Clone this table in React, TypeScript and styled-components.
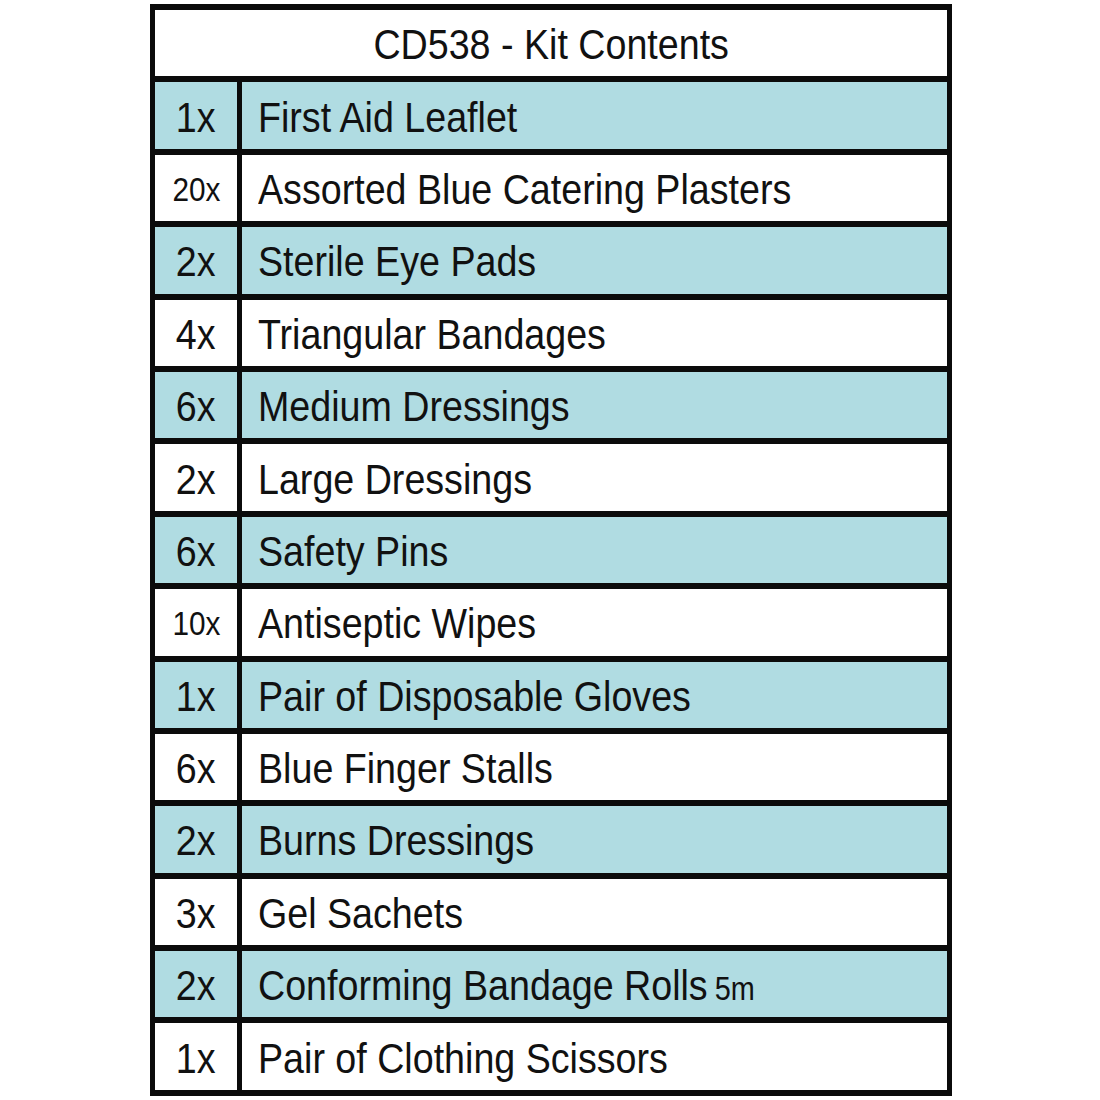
import React from 'react';
import styled, { createGlobalStyle } from 'styled-components';

const GlobalStyle = createGlobalStyle`
    html, body {
        margin: 0;
        padding: 0;
        background: #ffffff;
    }
    body {
        font-family: 'Liberation Sans', Arial, sans-serif;
        color: #111111;
    }
`;

const Page = styled.div`
    width: 1100px;
    height: 1100px;
    padding-top: 4px;
    padding-left: 150px;
    box-sizing: border-box;
`;

const Table = styled.div`
    width: 802px;
    display: grid;
    grid-template-columns: 82px 1fr;
    grid-auto-rows: 66.4px;
    gap: 6px 5px;
    padding: 6px 5px;
    box-sizing: border-box;
    background: #0b0b0b;
`;

// the artwork uses a condensed face, so squeeze Liberation Sans horizontally
const Narrow = styled.span<{ $origin: string }>`
    display: inline-block;
    white-space: nowrap;
    transform: scaleX(0.875);
    transform-origin: ${(p) => p.$origin} center;
`;

const Title = styled.div`
    grid-column: 1 / -1;
    background: #ffffff;
    display: flex;
    align-items: center;
    justify-content: center;
    font-size: 43px;
    padding-top: 2px;
`;

const Cell = styled.div<{ $shaded: boolean }>`
    background: ${(p) => (p.$shaded ? '#b0dce2' : '#ffffff')};
    display: flex;
    align-items: center;
    white-space: nowrap;
    overflow: hidden;
    padding-top: 3px;
`;

const Qty = styled(Cell)<{ $small: boolean }>`
    justify-content: center;
    font-size: ${(p) => (p.$small ? '34px' : '43px')};
`;

const Item = styled(Cell)`
    padding-left: 16px;
    font-size: 43px;
`;

const Unit = styled.span`
    font-size: 33px;
    margin-left: 8px;
`;

interface Entry {
    qty: string;
    name: string;
    unit?: string;
}

const entries: Entry[] = [
    { qty: '1x', name: 'First Aid Leaflet' },
    { qty: '20x', name: 'Assorted Blue Catering Plasters' },
    { qty: '2x', name: 'Sterile Eye Pads' },
    { qty: '4x', name: 'Triangular Bandages' },
    { qty: '6x', name: 'Medium Dressings' },
    { qty: '2x', name: 'Large Dressings' },
    { qty: '6x', name: 'Safety Pins' },
    { qty: '10x', name: 'Antiseptic Wipes' },
    { qty: '1x', name: 'Pair of Disposable Gloves' },
    { qty: '6x', name: 'Blue Finger Stalls' },
    { qty: '2x', name: 'Burns Dressings' },
    { qty: '3x', name: 'Gel Sachets' },
    { qty: '2x', name: 'Conforming Bandage Rolls', unit: '5m' },
    { qty: '1x', name: 'Pair of Clothing Scissors' },
];

export default function App() {
    return (
        <>
            <GlobalStyle />
            <Page>
                <Table>
                    <Title>
                        <Narrow $origin="center">CD538 - Kit Contents</Narrow>
                    </Title>
                    {entries.map((entry, index) => {
                        const shaded = index % 2 === 0;
                        return (
                            <React.Fragment key={index}>
                                <Qty $shaded={shaded} $small={entry.qty.length > 2}>
                                    <Narrow $origin="center">{entry.qty}</Narrow>
                                </Qty>
                                <Item $shaded={shaded}>
                                    <Narrow $origin="left">
                                        {entry.name}
                                        {entry.unit && <Unit>{entry.unit}</Unit>}
                                    </Narrow>
                                </Item>
                            </React.Fragment>
                        );
                    })}
                </Table>
            </Page>
        </>
    );
}
